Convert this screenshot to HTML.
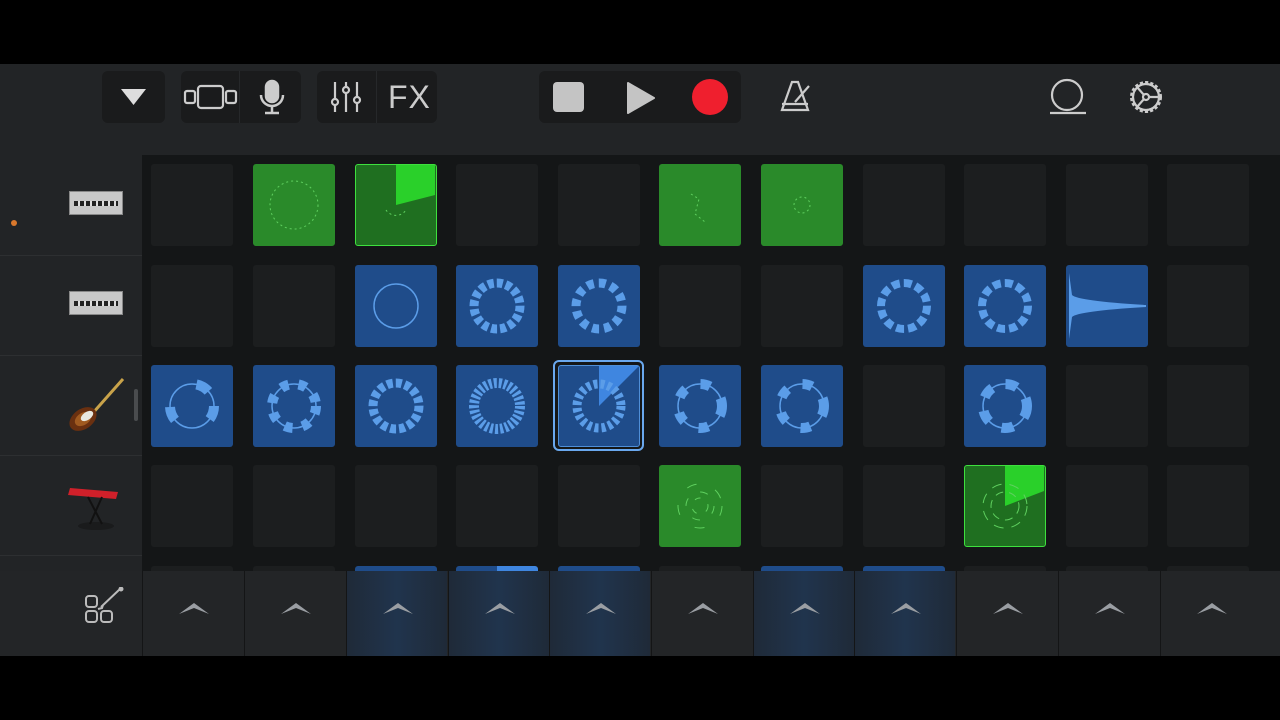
<!DOCTYPE html>
<html><head><meta charset="utf-8"><style>
*{margin:0;padding:0;box-sizing:border-box}
body{width:1280px;height:720px;background:#000;position:relative;overflow:hidden;font-family:"Liberation Sans",sans-serif}
.a{position:absolute}
.tb{left:0;top:64px;width:1280px;height:91px;background:#222426}
.btn{background:#1a1b1c;border-radius:6px;height:52px;top:71px}
.grid{left:142px;top:155px;width:1138px;height:416px;background:#141617}
.side{left:0;top:155px;width:142px;height:416px;background:#222426}
.c{position:absolute;width:82px;height:82px;border-radius:3px;background:#1c1e1f}
.b{background:#1f4c8a}
.g{background:#2a8a2a}
.gs{background:#1f6f20;border:1.5px solid #3ee03e}
.bot{left:0;top:571px;width:1280px;height:85px;background:#232527}
.bc{position:absolute;top:571px;width:101px;height:85px;border-left:1px solid #141516}
.bc.bl{background:linear-gradient(90deg,#1f2a38,#20344d 50%,#1f2a38)}
.chev{position:absolute;left:35px;top:30px}
.hl{left:0;width:142px;height:1px;background:#2d2f31}
</style></head><body>
<div class="a tb"></div>
<div class="a btn" style="left:102px;width:63px"></div>
<svg class="a" style="left:120px;top:88px" width="27" height="18"><path d="M1 1H26L13.5 17Z" fill="#ddd"/></svg>
<div class="a btn" style="left:181px;width:120px"></div>
<div class="a" style="left:239px;top:71px;width:1px;height:52px;background:#26282a"></div>
<svg class="a" style="left:183px;top:84px" width="56" height="26" fill="none" stroke="#ccc" stroke-width="2.2"><rect x="2" y="7" width="10" height="12" rx="2"/><rect x="15" y="2" width="25" height="22" rx="3"/><rect x="43" y="7" width="10" height="12" rx="2"/></svg>
<svg class="a" style="left:258px;top:79px" width="28" height="36" fill="none" stroke="#ccc" stroke-width="2.5"><rect x="8" y="2" width="12" height="21" rx="6" fill="#ccc"/><path d="M3 16a11 11 0 0 0 22 0M14 27v7M7 34h14"/></svg>
<div class="a btn" style="left:317px;width:120px"></div>
<div class="a" style="left:376px;top:71px;width:1px;height:52px;background:#26282a"></div>
<svg class="a" style="left:330px;top:80px" width="32" height="34" fill="none" stroke="#ccc" stroke-width="2.2"><path d="M5 2v30M16 2v30M27 2v30"/><circle cx="5" cy="22" r="3" fill="#1a1b1c"/><circle cx="16" cy="10" r="3" fill="#1a1b1c"/><circle cx="27" cy="20" r="3" fill="#1a1b1c"/></svg>
<div class="a" style="left:388px;top:79px;font-size:32px;color:#ccc;letter-spacing:1px">FX</div>
<div class="a btn" style="left:539px;width:202px"></div>
<div class="a" style="left:553px;top:82px;width:31px;height:30px;background:#c4c4c4;border-radius:4px"></div>
<svg class="a" style="left:627px;top:82px" width="28" height="32"><path d="M1 1L27 16L1 31Z" fill="#c4c4c4" stroke="#c4c4c4" stroke-linejoin="round" stroke-width="2"/></svg>
<div class="a" style="left:692px;top:79px;width:36px;height:36px;border-radius:50%;background:#ef1f2e"></div>
<svg class="a" style="left:779px;top:80px" width="34" height="34" fill="none" stroke="#ccc" stroke-width="2.2"><path d="M13 2h6l10 28H3Z"/><path d="M3 24h26M16 22l14-16"/></svg>
<svg class="a" style="left:1048px;top:78px" width="40" height="38" fill="none" stroke="#ccc" stroke-width="2.2"><circle cx="19" cy="17" r="15"/><path d="M2 35h36"/></svg>
<svg class="a" style="left:1127px;top:78px" width="38" height="38" fill="none" stroke="#ccc" stroke-width="2.2"><circle cx="19" cy="19" r="14" stroke-dasharray="3 2" stroke-width="4"/><circle cx="19" cy="19" r="13"/><circle cx="19" cy="19" r="3"/><path d="M22 19h10M17 17l-7-8M17 21l-7 8"/></svg>

<div class="a side"></div>
<div class="a hl" style="top:255px"></div><div class="a hl" style="top:355px"></div><div class="a hl" style="top:455px"></div><div class="a hl" style="top:555px"></div>
<div class="a" style="left:11px;top:220px;width:6px;height:6px;border-radius:50%;background:#d9782c"></div>
<div class="a" style="left:69px;top:191px;width:54px;height:24px;background:#c8c8c8;border:1px solid #888"><div style="margin:9px 4px;height:5px;background:repeating-linear-gradient(90deg,#222 0 4px,#ddd 4px 6px)"></div></div>
<div class="a" style="left:69px;top:291px;width:54px;height:24px;background:#c8c8c8;border:1px solid #888"><div style="margin:9px 4px;height:5px;background:repeating-linear-gradient(90deg,#222 0 4px,#ddd 4px 6px)"></div></div>
<svg class="a" style="left:64px;top:376px" width="62" height="58"><path d="M59 3L28 38" stroke="#c9a34a" stroke-width="3"/><ellipse cx="19" cy="43" rx="15" ry="10" fill="#6a3010" transform="rotate(-35 19 43)"/><ellipse cx="19" cy="43" rx="9" ry="6" fill="#a05a20" transform="rotate(-35 19 43)"/><ellipse cx="23" cy="40" rx="7" ry="4" fill="#e8e8e0" transform="rotate(-35 23 40)"/></svg>
<div class="a" style="left:134px;top:389px;width:4px;height:32px;border-radius:2px;background:#4a4c4e"></div>
<svg class="a" style="left:66px;top:484px" width="56" height="48"><ellipse cx="30" cy="42" rx="18" ry="4" fill="#1a1b1c"/><path d="M4 4L52 8L50 15L2 11Z" fill="#d0202a"/><path d="M22 13L36 40M36 13L24 40" stroke="#111" stroke-width="2"/></svg>

<div class="a grid"></div>
<div id="cells">
<div class="c" style="left:151px;top:164px"></div>
<div class="c g" style="left:253px;top:164px"><svg width="82" height="82"><circle cx="41" cy="41" r="24" fill="none" stroke="#5fd05f" stroke-dasharray="2 3"/></svg></div>
<div class="c gs" style="left:355px;top:164px"><svg width="79" height="79"><path d="M40 0H79V30L40 40Z" fill="#2ad02a"/><path d="M30 45a12 12 0 0 0 20 0" fill="none" stroke="#5fd05f" stroke-dasharray="2 3"/></svg></div>
<div class="c" style="left:456px;top:164px"></div>
<div class="c" style="left:558px;top:164px"></div>
<div class="c g" style="left:659px;top:164px"><svg width="82" height="82"><path d="M32 30l8 5-4 15 10 8" fill="none" stroke="#5fd05f" stroke-dasharray="2 3"/></svg></div>
<div class="c g" style="left:761px;top:164px"><svg width="82" height="82"><circle cx="41" cy="41" r="8" fill="none" stroke="#5fd05f" stroke-dasharray="2 3"/></svg></div>
<div class="c" style="left:863px;top:164px"></div>
<div class="c" style="left:964px;top:164px"></div>
<div class="c" style="left:1066px;top:164px"></div>
<div class="c" style="left:1167px;top:164px"></div>
<div class="c" style="left:151px;top:265px"></div>
<div class="c" style="left:253px;top:265px"></div>
<div class="c b" style="left:355px;top:265px"><svg width="82" height="82"><circle cx="41" cy="41" r="22" fill="none" stroke="#5b9de8" stroke-width="1.5"/></svg></div>
<div class="c b" style="left:456px;top:265px"><svg width="82" height="82"><circle cx="41" cy="41" r="23" fill="none" stroke="#5b9de8" stroke-width="9" stroke-dasharray="6 3"/></svg></div>
<div class="c b" style="left:558px;top:265px"><svg width="82" height="82"><circle cx="41" cy="41" r="23" fill="none" stroke="#5b9de8" stroke-width="9" stroke-dasharray="7 5"/></svg></div>
<div class="c" style="left:659px;top:265px"></div>
<div class="c" style="left:761px;top:265px"></div>
<div class="c b" style="left:863px;top:265px"><svg width="82" height="82"><circle cx="41" cy="41" r="23" fill="none" stroke="#5b9de8" stroke-width="8" stroke-dasharray="8 4"/></svg></div>
<div class="c b" style="left:964px;top:265px"><svg width="82" height="82"><circle cx="41" cy="41" r="23" fill="none" stroke="#5b9de8" stroke-width="8" stroke-dasharray="8 4"/></svg></div>
<div class="c b" style="left:1066px;top:265px"><svg width="82" height="82"><path d="M3 8L6 30Q12 36 80 40L80 42Q12 46 6 52L3 74Z" fill="#5b9de8"/></svg></div>
<div class="c" style="left:1167px;top:265px"></div>
<div class="c b" style="left:151px;top:365px"><svg width="82" height="82"><circle cx="41" cy="41" r="22" fill="none" stroke="#5b9de8" stroke-width="1.5"/><circle cx="41" cy="41" r="22" fill="none" stroke="#5b9de8" stroke-width="10" stroke-dasharray="14 40"/></svg></div>
<div class="c b" style="left:253px;top:365px"><svg width="82" height="82"><circle cx="41" cy="41" r="22" fill="none" stroke="#5b9de8" stroke-width="1.5"/><circle cx="41" cy="41" r="22" fill="none" stroke="#5b9de8" stroke-width="10" stroke-dasharray="8 10"/></svg></div>
<div class="c b" style="left:355px;top:365px"><svg width="82" height="82"><circle cx="41" cy="41" r="23" fill="none" stroke="#5b9de8" stroke-width="9" stroke-dasharray="6 3"/></svg></div>
<div class="c b" style="left:456px;top:365px"><svg width="82" height="82"><circle cx="41" cy="41" r="23" fill="none" stroke="#5b9de8" stroke-width="10" stroke-dasharray="3 2"/></svg></div>
<div class="a" style="left:553px;top:360px;width:91px;height:91px;border:2px solid #6aa8ee;border-radius:6px"></div>
<div class="c b" style="left:558px;top:365px;border:1px solid #4f8fd8"><svg width="80" height="80"><path d="M40 40L40 0H80Z" fill="#3f86e0"/><circle cx="40" cy="40" r="22" fill="none" stroke="#5b9de8" stroke-width="9" stroke-dasharray="4 3"/></svg></div>
<div class="c b" style="left:659px;top:365px"><svg width="82" height="82"><circle cx="41" cy="41" r="22" fill="none" stroke="#5b9de8" stroke-width="1.5"/><circle cx="41" cy="41" r="22" fill="none" stroke="#5b9de8" stroke-width="10" stroke-dasharray="10 16"/></svg></div>
<div class="c b" style="left:761px;top:365px"><svg width="82" height="82"><circle cx="41" cy="41" r="22" fill="none" stroke="#5b9de8" stroke-width="1.5"/><circle cx="41" cy="41" r="22" fill="none" stroke="#5b9de8" stroke-width="10" stroke-dasharray="10 16"/></svg></div>
<div class="c" style="left:863px;top:365px"></div>
<div class="c b" style="left:964px;top:365px"><svg width="82" height="82"><circle cx="41" cy="41" r="22" fill="none" stroke="#5b9de8" stroke-width="1.5"/><circle cx="41" cy="41" r="22" fill="none" stroke="#5b9de8" stroke-width="10" stroke-dasharray="12 14"/></svg></div>
<div class="c" style="left:1066px;top:365px"></div>
<div class="c" style="left:1167px;top:365px"></div>
<div class="c" style="left:151px;top:465px"></div>
<div class="c" style="left:253px;top:465px"></div>
<div class="c" style="left:355px;top:465px"></div>
<div class="c" style="left:456px;top:465px"></div>
<div class="c" style="left:558px;top:465px"></div>
<div class="c g" style="left:659px;top:465px"><svg width="82" height="82" fill="none" stroke="#5fd05f"><circle cx="41" cy="41" r="22" stroke-dasharray="10 20"/><circle cx="41" cy="41" r="14" stroke-dasharray="8 14"/><circle cx="41" cy="41" r="8" stroke-dasharray="6 10"/></svg></div>
<div class="c" style="left:761px;top:465px"></div>
<div class="c" style="left:863px;top:465px"></div>
<div class="c gs" style="left:964px;top:465px"><svg width="79" height="79" fill="none" stroke="#5fd05f"><path d="M40 40L40 0H79V25Z" fill="#2ad02a" stroke="none"/><circle cx="40" cy="40" r="22" stroke-dasharray="10 8"/><circle cx="40" cy="40" r="14" stroke-dasharray="8 6"/></svg></div>
<div class="c" style="left:1066px;top:465px"></div>
<div class="c" style="left:1167px;top:465px"></div>
<div class="c" style="left:151px;top:566px"></div>
<div class="c" style="left:253px;top:566px"></div>
<div class="c b" style="left:355px;top:566px"></div>
<div class="c b" style="left:456px;top:566px;background:linear-gradient(90deg,#1f4c8a 50%,#3f86e0 50%)"></div>
<div class="c b" style="left:558px;top:566px"></div>
<div class="c" style="left:659px;top:566px"></div>
<div class="c b" style="left:761px;top:566px"></div>
<div class="c b" style="left:863px;top:566px"></div>
<div class="c" style="left:964px;top:566px"></div>
<div class="c" style="left:1066px;top:566px"></div>
<div class="c" style="left:1167px;top:566px"></div>
</div>

<div class="a bot"></div>
<svg class="a" style="left:84px;top:587px" width="42" height="40" fill="none" stroke="#bbb" stroke-width="2"><rect x="2" y="9" width="11" height="11" rx="3"/><rect x="2" y="24" width="11" height="11" rx="3"/><rect x="17" y="24" width="11" height="11" rx="3"/><path d="M17 20L36 2M14 22l4-1 1-3"/><circle cx="37" cy="2" r="1.5" fill="#bbb"/></svg>
<div class="bc" style="left:142px"><svg class="chev" width="32" height="14"><path d="M1 13L16 2L31 13L16 7Z" fill="#9a9ea3"/></svg></div>
<div class="bc" style="left:244px"><svg class="chev" width="32" height="14"><path d="M1 13L16 2L31 13L16 7Z" fill="#9a9ea3"/></svg></div>
<div class="bc bl" style="left:346px"><svg class="chev" width="32" height="14"><path d="M1 13L16 2L31 13L16 7Z" fill="#9a9ea3"/></svg></div>
<div class="bc bl" style="left:448px"><svg class="chev" width="32" height="14"><path d="M1 13L16 2L31 13L16 7Z" fill="#9a9ea3"/></svg></div>
<div class="bc bl" style="left:549px"><svg class="chev" width="32" height="14"><path d="M1 13L16 2L31 13L16 7Z" fill="#9a9ea3"/></svg></div>
<div class="bc" style="left:651px"><svg class="chev" width="32" height="14"><path d="M1 13L16 2L31 13L16 7Z" fill="#9a9ea3"/></svg></div>
<div class="bc bl" style="left:753px"><svg class="chev" width="32" height="14"><path d="M1 13L16 2L31 13L16 7Z" fill="#9a9ea3"/></svg></div>
<div class="bc bl" style="left:854px"><svg class="chev" width="32" height="14"><path d="M1 13L16 2L31 13L16 7Z" fill="#9a9ea3"/></svg></div>
<div class="bc" style="left:956px"><svg class="chev" width="32" height="14"><path d="M1 13L16 2L31 13L16 7Z" fill="#9a9ea3"/></svg></div>
<div class="bc" style="left:1058px"><svg class="chev" width="32" height="14"><path d="M1 13L16 2L31 13L16 7Z" fill="#9a9ea3"/></svg></div>
<div class="bc" style="left:1160px;width:120px"><svg class="chev" width="32" height="14"><path d="M1 13L16 2L31 13L16 7Z" fill="#9a9ea3"/></svg></div>
</body></html>
